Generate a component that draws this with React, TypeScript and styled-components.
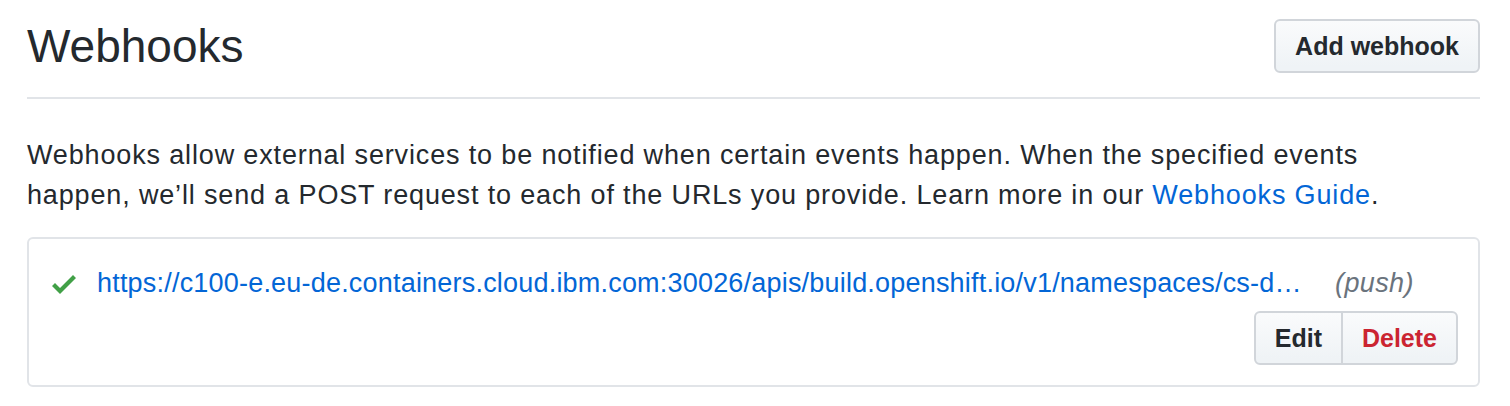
import styled, { createGlobalStyle } from "styled-components";

const GlobalStyle = createGlobalStyle`
  body {
    margin: 0;
    background: #ffffff;
    font-family: "Liberation Sans", Arial, sans-serif;
    color: #24292e;
  }
`;

const Page = styled.div`
  width: 1453px;
  padding-left: 27px;
`;

const Header = styled.div`
  display: flex;
  align-items: center;
  justify-content: space-between;
  padding: 19px 0 24px;
  border-bottom: 2px solid #e1e4e8;
`;

const Title = styled.h2`
  margin: 0;
  font-size: 46px;
  font-weight: 400;
  line-height: 54px;
  color: #24292e;
`;

const Button = styled.button<{ $danger?: boolean }>`
  height: 54px;
  padding: 0 19px;
  font-family: inherit;
  font-size: 25px;
  font-weight: 700;
  color: ${(p) => (p.$danger ? "#cb2431" : "#24292e")};
  background: linear-gradient(180deg, #fafbfc, #eff3f6 90%);
  border: 2px solid #d1d5da;
  border-radius: 6px;
  cursor: pointer;
`;

const Intro = styled.p`
  margin: 36px 0 22px;
  font-size: 27px;
  line-height: 40px;
  letter-spacing: 0.85px;
`;

const Link = styled.a`
  color: #0366d6;
  text-decoration: none;
`;

const HookBox = styled.div`
  border: 2px solid #e1e4e8;
  border-radius: 6px;
  padding: 25px 20px 20px 23px;
`;

const HookRow = styled.div`
  display: flex;
  align-items: center;
  font-size: 27px;
  line-height: 39px;
`;

const CheckIcon = styled.svg`
  flex: none;
  width: 24px;
  height: 32px;
  margin-right: 21px;
  fill: #41a047;
`;

const HookUrl = styled(Link)`
  max-width: 1212px;
  overflow: hidden;
  white-space: nowrap;
  text-overflow: ellipsis;
  letter-spacing: 0.2px;
`;

const Events = styled.span`
  margin-left: 26px;
  font-style: italic;
  color: #6a737d;
  letter-spacing: 0.4px;
`;

const Actions = styled.div`
  display: flex;
  justify-content: flex-end;
  margin-top: 8px;
`;

const GroupButton = styled(Button)<{ $first?: boolean }>`
  border-radius: ${(p) => (p.$first ? "6px 0 0 6px" : "0 6px 6px 0")};
  ${(p) => (p.$first ? "" : "margin-left: -2px;")}
`;

const App = () => {
  return (
    <Page>
      <GlobalStyle />
      <Header>
        <Title>Webhooks</Title>
        <Button>Add webhook</Button>
      </Header>
      <Intro>
        Webhooks allow external services to be notified when certain events
        happen. When the specified events
        <br />
        happen, we’ll send a POST request to each of the URLs you provide.
        Learn more in our <Link href="#">Webhooks Guide</Link>.
      </Intro>
      <HookBox>
        <HookRow>
          <CheckIcon viewBox="0 0 12 16">
            <path d="M12 5l-8 8-4-4 1.5-1.5L4 10l6.5-6.5L12 5z" />
          </CheckIcon>
          <HookUrl href="#">
            https://c100-e.eu-de.containers.cloud.ibm.com:30026/apis/build.openshift.io/v1/namespaces/cs-dev/buildconfigs/webhook/github
          </HookUrl>
          <Events>(push)</Events>
        </HookRow>
        <Actions>
          <GroupButton $first>Edit</GroupButton>
          <GroupButton $danger>Delete</GroupButton>
        </Actions>
      </HookBox>
    </Page>
  );
};

export default App;
